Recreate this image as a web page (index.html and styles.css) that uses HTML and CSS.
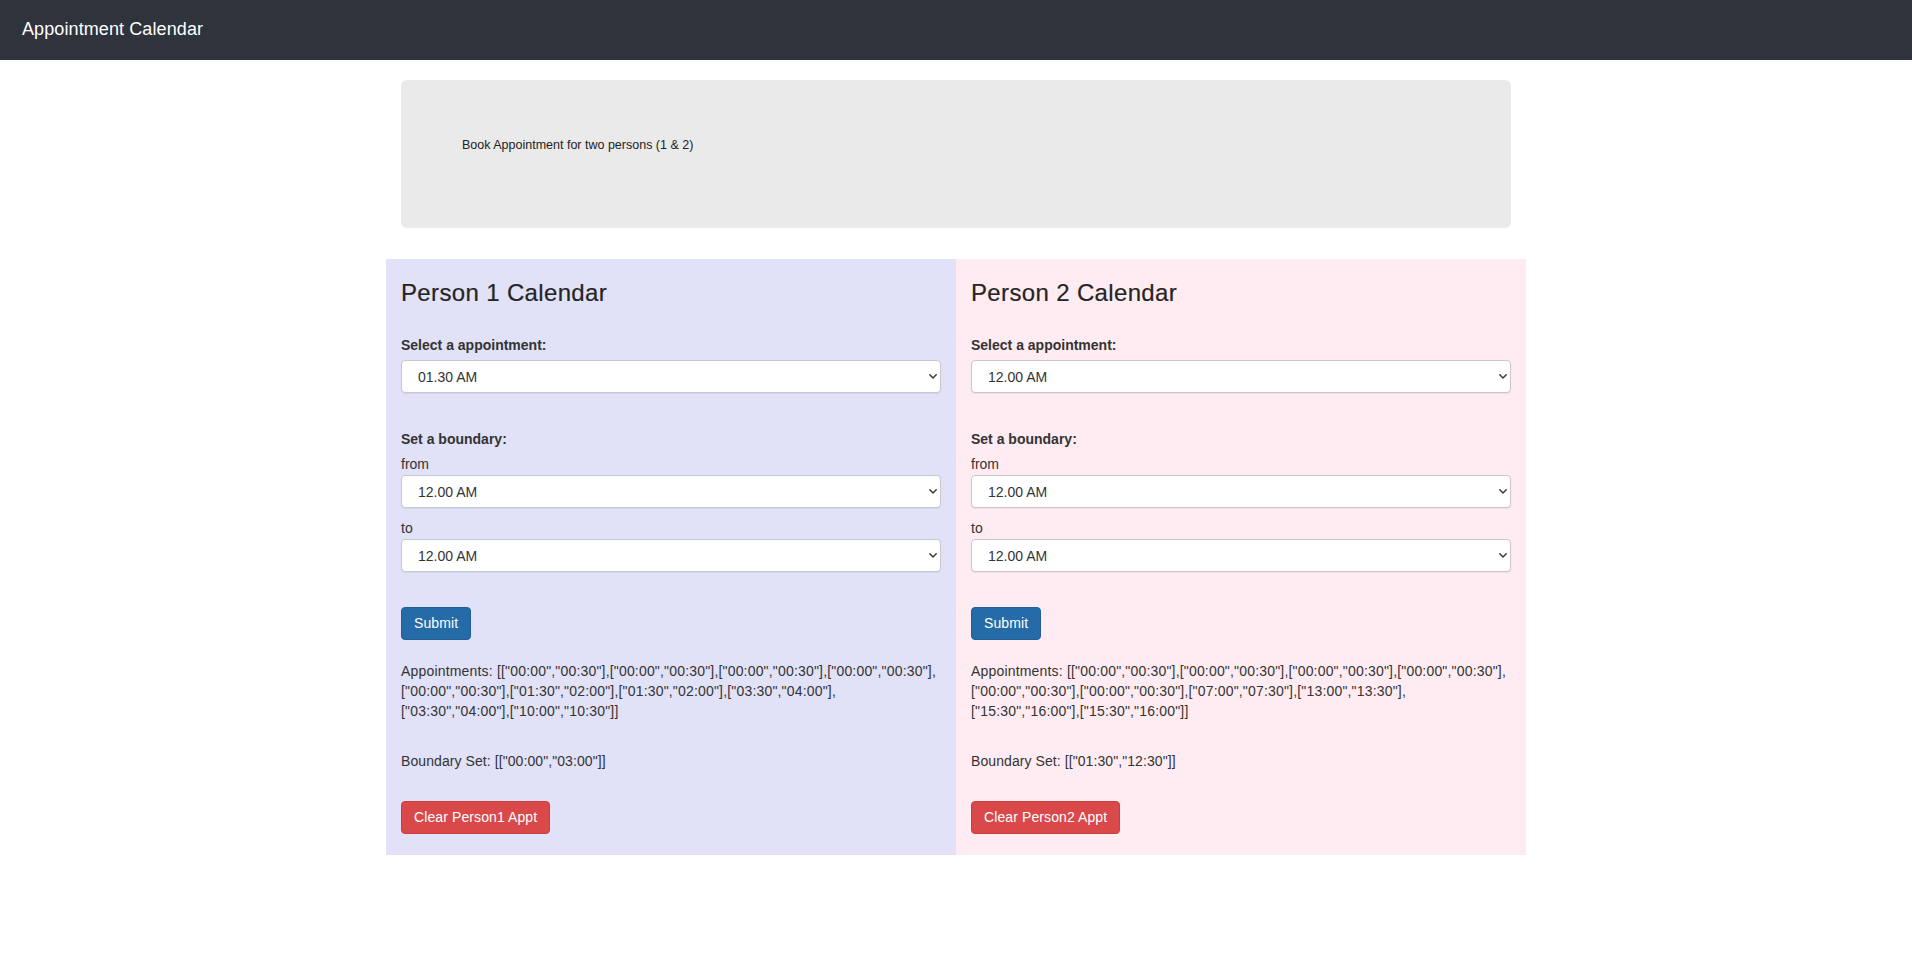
FILE: index.html
```html
<!DOCTYPE html>
<html lang="en">
<head>
<meta charset="utf-8">
<title>Appointment Calendar</title>
<link rel="stylesheet" href="styles.css">
</head>
<body>
<nav class="navbar"><span class="brand">Appointment Calendar</span></nav>
<div class="container">
  <div class="jumbotron"><p>Book Appointment for two persons (1 &amp; 2)</p></div>
  <div class="calendars">
    <section class="panel panel-p1">
      <h4>Person 1 Calendar</h4>
      <label class="lbl lbl-first">Select a appointment:</label>
      <div class="select-wrap">
        <select><option>01.30 AM</option></select>
        <svg class="chev" width="8" height="5" viewBox="0 0 8 5"><path d="M0.8 0.8 L4 4 L7.2 0.8" fill="none" stroke="#3a3a3a" stroke-width="1.5" stroke-linecap="round" stroke-linejoin="round"/></svg>
      </div>
      <label class="lbl lbl-boundary">Set a boundary:</label>
      <div class="sub">from</div>
      <div class="select-wrap">
        <select><option>12.00 AM</option></select>
        <svg class="chev" width="8" height="5" viewBox="0 0 8 5"><path d="M0.8 0.8 L4 4 L7.2 0.8" fill="none" stroke="#3a3a3a" stroke-width="1.5" stroke-linecap="round" stroke-linejoin="round"/></svg>
      </div>
      <div class="sub sub-to">to</div>
      <div class="select-wrap">
        <select><option>12.00 AM</option></select>
        <svg class="chev" width="8" height="5" viewBox="0 0 8 5"><path d="M0.8 0.8 L4 4 L7.2 0.8" fill="none" stroke="#3a3a3a" stroke-width="1.5" stroke-linecap="round" stroke-linejoin="round"/></svg>
      </div>
      <button class="btn btn-primary" type="button">Submit</button>
      <p class="appts">Appointments: [["00:00","00:30"],["00:00","00:30"],["00:00","00:30"],["00:00","00:30"],<br>["00:00","00:30"],["01:30","02:00"],["01:30","02:00"],["03:30","04:00"],<br>["03:30","04:00"],["10:00","10:30"]]</p>
      <p class="bounds">Boundary Set: [["00:00","03:00"]]</p>
      <button class="btn btn-danger" type="button">Clear Person1 Appt</button>
    </section>
    <section class="panel panel-p2">
      <h4>Person 2 Calendar</h4>
      <label class="lbl lbl-first">Select a appointment:</label>
      <div class="select-wrap">
        <select><option>12.00 AM</option></select>
        <svg class="chev" width="8" height="5" viewBox="0 0 8 5"><path d="M0.8 0.8 L4 4 L7.2 0.8" fill="none" stroke="#3a3a3a" stroke-width="1.5" stroke-linecap="round" stroke-linejoin="round"/></svg>
      </div>
      <label class="lbl lbl-boundary">Set a boundary:</label>
      <div class="sub">from</div>
      <div class="select-wrap">
        <select><option>12.00 AM</option></select>
        <svg class="chev" width="8" height="5" viewBox="0 0 8 5"><path d="M0.8 0.8 L4 4 L7.2 0.8" fill="none" stroke="#3a3a3a" stroke-width="1.5" stroke-linecap="round" stroke-linejoin="round"/></svg>
      </div>
      <div class="sub sub-to">to</div>
      <div class="select-wrap">
        <select><option>12.00 AM</option></select>
        <svg class="chev" width="8" height="5" viewBox="0 0 8 5"><path d="M0.8 0.8 L4 4 L7.2 0.8" fill="none" stroke="#3a3a3a" stroke-width="1.5" stroke-linecap="round" stroke-linejoin="round"/></svg>
      </div>
      <button class="btn btn-primary" type="button">Submit</button>
      <p class="appts">Appointments: [["00:00","00:30"],["00:00","00:30"],["00:00","00:30"],["00:00","00:30"],<br>["00:00","00:30"],["00:00","00:30"],["07:00","07:30"],["13:00","13:30"],<br>["15:30","16:00"],["15:30","16:00"]]</p>
      <p class="bounds">Boundary Set: [["01:30","12:30"]]</p>
      <button class="btn btn-danger" type="button">Clear Person2 Appt</button>
    </section>
  </div>
</div>
</body>
</html>
```
FILE: styles.css
```css
* { box-sizing: border-box; }
html, body { margin: 0; padding: 0; }
body {
  font-family: "Liberation Sans", Arial, Helvetica, sans-serif;
  font-size: 14px;
  line-height: 20px;
  color: #333;
  background: #fff;
}
.navbar {
  height: 60px;
  background: #2f333b;
  padding: 19px 22px 0;
}
.brand {
  display: block;
  font-size: 18px;
  line-height: 20px;
  letter-spacing: 0.1px;
  color: #fff;
}
.container {
  width: 1140px;
  margin: 0 auto;
}
.jumbotron {
  margin: 20px 15px 31px;
  height: 148px;
  background: #eaeaea;
  border-radius: 6px;
  padding: 56px 61px 0;
}
.jumbotron p {
  margin: 0;
  font-size: 12.5px;
  line-height: 18px;
  color: #222;
}
.calendars {
  display: grid;
  grid-template-columns: 1fr 1fr;
}
.panel {
  display: flex;
  flex-direction: column;
  align-items: flex-start;
  padding: 19px 15px 21px;
}
.panel-p1 { background: #e1e1f7; }
.panel-p2 { background: #ffecf2; }
.panel h4 {
  margin: 0;
  font-size: 24px;
  line-height: 29px;
  font-weight: 400;
  letter-spacing: 0.35px;
  color: #252525;
  -webkit-text-stroke: 0.2px #252525;
}
.lbl {
  display: block;
  font-weight: 700;
  line-height: 20px;
}
.lbl-first { margin-top: 28px; margin-bottom: 5px; }
.lbl-boundary { margin-top: 36px; margin-bottom: 5px; }
.sub { line-height: 20px; margin-bottom: 1px; }
.sub-to { margin-top: 10px; }
.select-wrap {
  position: relative;
  width: 100%;
}
.select-wrap select {
  display: block;
  width: 100%;
  height: 33px;
  margin: 0;
  padding: 0 16px;
  -webkit-appearance: none;
  appearance: none;
  background: #fff;
  border: 1px solid #c8c8cc;
  border-radius: 4px;
  box-shadow: 0 1px 1px rgba(0, 0, 0, 0.06);
  font-family: "Liberation Sans", Arial, Helvetica, sans-serif;
  font-size: 14px;
  color: #333;
}
.chev {
  position: absolute;
  right: 4px;
  top: 14px;
  pointer-events: none;
}
.btn {
  display: inline-block;
  height: 33px;
  padding: 6px 12px;
  border: 1px solid transparent;
  border-radius: 4px;
  font-family: "Liberation Sans", Arial, Helvetica, sans-serif;
  font-size: 14px;
  line-height: 19px;
  letter-spacing: 0.1px;
  color: #fff;
  cursor: pointer;
}
.btn-primary {
  margin-top: 35px;
  background: #256ba8;
  border-color: #215f96;
}
.btn-danger {
  margin-top: 30px;
  background: #d9494a;
  border-color: #d03b3c;
}
.appts {
  margin: 21px 0 0;
  line-height: 20px;
  letter-spacing: 0.18px;
}
.bounds {
  margin: 30px 0 0;
  line-height: 20px;
  letter-spacing: 0.08px;
}
```
